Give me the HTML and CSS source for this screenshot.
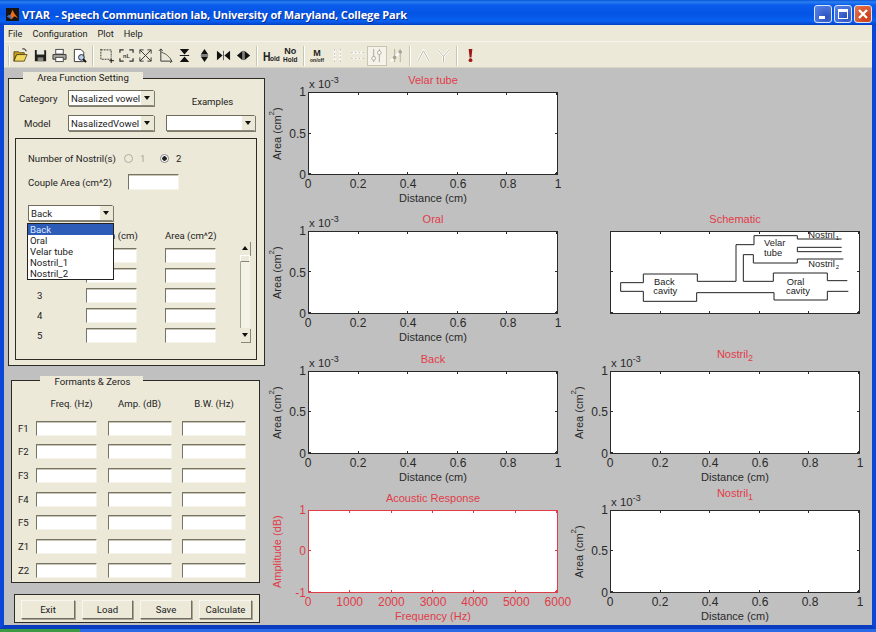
FILE: index.html
```html
<!DOCTYPE html>
<html lang="en">
<head>
    <meta charset="UTF-8">
    <title>VTAR - Speech Communication lab, University of Maryland, College Park</title>
    <link rel="stylesheet" href="styles.css">
</head>
<body>
<div class="window">
    <div class="titlebar">
        <svg class="app-icon" viewBox="0 0 14 14"><rect width="14" height="14" fill="#1a1410"/><path d="M1 9 L5 7 L7 2 L9 6 L13 11 L9 9 L6 12 Z" fill="#e8701a"/><path d="M1 9 L5 7 L6 12 Z" fill="#3a70c8"/></svg>
        <span class="title-text">VTAR &nbsp;- Speech Communication lab, University of Maryland, College Park</span>
        <div class="window-buttons">
            <div class="win-btn"><span class="min-glyph"></span></div>
            <div class="win-btn"><span class="max-glyph"></span></div>
            <div class="win-btn win-close">
                <svg viewBox="0 0 18 18"><path d="M5 5 L13 13 M13 5 L5 13" stroke="#fff" stroke-width="2.4"/></svg>
            </div>
        </div>
    </div>

    <div class="window-body">
        <div class="menubar">
            <span>File</span>
            <span>Configuration</span>
            <span>Plot</span>
            <span>Help</span>
        </div>

        <div class="toolbar">
            <div class="grip"></div>
            <!-- file -->
            <div class="tool"><svg viewBox="0 0 16 16"><path d="M1 4h5l1 1h5v2H4L1 14z" fill="#c8a020" stroke="#403000" stroke-width=".8"/><path d="M4 7h11l-3 7H1z" fill="#f0d860" stroke="#403000" stroke-width=".8"/><path d="M10 1c2-.5 4 .5 4 2.500" fill="none" stroke="#000"/></svg></div>
            <div class="tool"><svg viewBox="0 0 16 16"><path d="M2 2h11l1 1v11H2z" fill="#20201c"/><rect x="4" y="2" width="8" height="5" fill="#e8e8e0"/><rect x="5" y="10" width="6" height="4" fill="#8a8a80"/></svg></div>
            <div class="tool"><svg viewBox="0 0 16 16"><rect x="4" y="1.500" width="8" height="5" fill="#fff" stroke="#444"/><path d="M1 7h14v5H1z" fill="#a8a8a0" stroke="#333"/><rect x="4" y="10" width="8" height="4.500" fill="#fff" stroke="#444"/></svg></div>
            <div class="tool"><svg viewBox="0 0 16 16"><path d="M2.500 1.500h7l3 3v10h-10z" fill="#fff" stroke="#333"/><circle cx="10" cy="10" r="3" fill="#b8d0e8" stroke="#223"/><path d="M12 12l3 3" stroke="#111" stroke-width="2"/></svg></div>
            <div class="sep"></div>
            <!-- zoom and axes -->
            <div class="tool"><svg viewBox="0 0 16 16"><path d="M2 1v11h11" fill="none" stroke="#333" stroke-dasharray="2 1"/><path d="M2 2h11v8" fill="none" stroke="#333" stroke-dasharray="2 1"/><path d="M13 11v5M11 13.500h5" stroke="#111"/></svg></div>
            <div class="tool"><svg viewBox="0 0 16 16"><path d="M1 5V2h4M11 2h4v3M15 11v3h-4M5 14H1v-3" fill="none" stroke="#333" stroke-width="1.300"/><text class="icon-text" x="8" y="10.500" text-anchor="middle">nL</text></svg></div>
            <div class="tool"><svg viewBox="0 0 16 16"><path d="M2 2l12 12M14 2L2 14M2 2h4M2 2v4M14 2h-4M14 2v4M2 14h4M2 14v-4M14 14h-4M14 14v-4" fill="none" stroke="#333"/></svg></div>
            <div class="tool"><svg viewBox="0 0 16 16"><path d="M3 1v13h12" fill="none" stroke="#333"/><path d="M3 4l6 3 5 5" fill="none" stroke="#555"/><path d="M1 3l2-2 2 2M13 12l2 2-2 2" fill="none" stroke="#333"/></svg></div>
            <div class="tool"><svg viewBox="0 0 16 16"><path d="M3 1h10L8 7zM3 15h10L8 9z" fill="#111"/><path d="M3 8h10" stroke="#111"/></svg></div>
            <div class="tool"><svg viewBox="0 0 16 16"><path d="M8 1l4 6H4zM8 15l-4-6h8z" fill="#111"/><path d="M4 8h8" stroke="#777"/></svg></div>
            <div class="tool"><svg viewBox="0 0 16 16"><path d="M1 3v10l6-5zM15 3v10L9 8z" fill="#111"/><path d="M8 3v10" stroke="#555"/></svg></div>
            <div class="tool"><svg viewBox="0 0 16 16"><path d="M7 3v10L1 8zM9 3v10l6-5z" fill="#111"/><path d="M8 3v10" stroke="#777"/></svg></div>
            <div class="sep"></div>
            <!-- hold -->
            <div class="tool tool-hold"><span class="hold-big">H</span><span class="hold-small">old</span></div>
            <div class="tool tool-stack"><span class="hold-no">No</span><span class="hold-under">Hold</span></div>
            <div class="sep sep-tight"></div>
            <div class="tool tool-wide tool-stack"><span class="hold-no">M</span><span class="hold-tiny">on/off</span></div>
            <!-- disabled cursors -->
            <div class="tool"><svg viewBox="0 0 16 16"><path d="M5 1v14M11 1v14" stroke="#fff" stroke-width="2"/><path d="M5 1v14M11 1v14" stroke="#b8b5a4" stroke-dasharray="2 2"/></svg></div>
            <div class="tool"><svg viewBox="0 0 16 16"><path d="M1 5h14M1 11h14" stroke="#fff" stroke-width="2"/><path d="M1 5h14M1 11h14" stroke="#b8b5a4" stroke-dasharray="2 2"/></svg></div>
            <div class="tool tool-pressed"><svg viewBox="0 0 16 16"><path d="M5 1v14M11 1v14" stroke="#a8a594"/><circle cx="5" cy="11" r="2" fill="#fff" stroke="#a8a594"/><circle cx="11" cy="5" r="2" fill="#fff" stroke="#a8a594"/></svg></div>
            <div class="tool"><svg viewBox="0 0 16 16"><path d="M6 1v14M12 1v14" stroke="#b0ad9c"/><path d="M2 14L14 2" stroke="#fff" stroke-width="2"/><circle cx="6" cy="10" r="2" fill="#a8a594"/><circle cx="12" cy="4" r="2" fill="#a8a594"/></svg></div>
            <div class="sep"></div>
            <div class="tool"><svg viewBox="0 0 16 16"><path d="M2 14L8 3l6 11" fill="none" stroke="#fff" stroke-width="2.500"/><path d="M2 14L8 3l6 11" fill="none" stroke="#b8b5a4"/></svg></div>
            <div class="tool"><svg viewBox="0 0 16 16"><path d="M2 2l6 7 6-7M8 9v6" fill="none" stroke="#fff" stroke-width="2.500"/><path d="M2 2l6 7 6-7M8 9v6" fill="none" stroke="#b8b5a4"/></svg></div>
            <div class="sep"></div>
            <div class="tool"><svg viewBox="0 0 16 16"><path d="M6 1h4l-1 9H7z" fill="#a01818"/><circle cx="8" cy="13" r="2" fill="#a01818"/></svg></div>
        </div>

        <div class="client">
            <div class="controls">
                <div class="panel panel-setting">
                    <div class="panel-title title-setting">Area Function Setting</div>
                    <div class="setting-top">
                        <label>Category</label>
                        <div class="select"><span>Nasalized vowel</span><i class="arrow"></i></div>
                        <label class="examples-label">Examples</label>
                        <label class="model-label">Model</label>
                        <div class="select"><span>NasalizedVowel</span><i class="arrow"></i></div>
                        <div class="select select-examples"><span></span><i class="arrow"></i></div>
                    </div>

                    <div class="panel section-panel">
                        <div class="nostril-row">
                            <span class="nostril-label">Number of Nostril(s)</span>
                            <i class="radio radio-off"></i><span class="radio-text radio-text-off">1</span>
                            <i class="radio radio-on"></i><span class="radio-text">2</span>
                        </div>
                        <div class="couple-row">
                            <span class="couple-label">Couple Area (cm^2)</span>
                            <div class="field field-couple"></div>
                        </div>
                        <div class="section-select">
                            <div class="select"><span>Back</span><i class="arrow"></i></div>
                            <ul class="dropdown">
                                <li class="selected">Back</li>
                                <li>Oral</li>
                                <li>Velar tube</li>
                                <li>Nostril_1</li>
                                <li>Nostril_2</li>
                            </ul>
                        </div>
                        <div class="section-area">
                            <div class="section-table">
                                <span></span><span class="col-head">Length (cm)</span><span class="col-head">Area (cm^2)</span>
                                <span class="row-num"></span><div class="field"></div><div class="field"></div>
                                <span class="row-num"></span><div class="field"></div><div class="field"></div>
                                <span class="row-num">3</span><div class="field"></div><div class="field"></div>
                                <span class="row-num">4</span><div class="field"></div><div class="field"></div>
                                <span class="row-num">5</span><div class="field"></div><div class="field"></div>
                            </div>
                            <div class="scrollbar">
                                <div class="scroll-btn"><i class="arrow-up"></i></div>
                                <div class="scroll-thumb"></div>
                                <div class="scroll-track"></div>
                                <div class="scroll-btn"><i class="arrow"></i></div>
                            </div>
                        </div>
                    </div>
                </div>

                <div class="panel panel-formants">
                    <div class="panel-title title-formants">Formants &amp; Zeros</div>
                    <div class="formant-table">
                        <span></span><span class="col-head col-freq">Freq. (Hz)</span><span class="col-head">Amp. (dB)</span><span class="col-head">B.W. (Hz)</span>
                        <span>F1</span><div class="field"></div><div class="field"></div><div class="field"></div>
                        <span>F2</span><div class="field"></div><div class="field"></div><div class="field"></div>
                        <span>F3</span><div class="field"></div><div class="field"></div><div class="field"></div>
                        <span>F4</span><div class="field"></div><div class="field"></div><div class="field"></div>
                        <span>F5</span><div class="field"></div><div class="field"></div><div class="field"></div>
                        <span>Z1</span><div class="field"></div><div class="field"></div><div class="field"></div>
                        <span>Z2</span><div class="field"></div><div class="field"></div><div class="field"></div>
                    </div>
                </div>

                <div class="panel panel-buttons">
                    <button class="btn btn-exit">Exit</button>
                    <button class="btn btn-load">Load</button>
                    <button class="btn btn-save">Save</button>
                    <button class="btn btn-calc">Calculate</button>
                </div>
            </div>

            <div class="plots">
                <div class="plot">
                    <div class="plot-head"><span class="scale">x 10<sup>-3</sup></span><span class="plot-title">Velar tube</span></div>
                    <div class="plot-body">
                        <span class="ylabel">Area (cm<sup>2</sup>)</span>
                        <div class="yticks"><span>1</span><span>0.5</span><span>0</span></div>
                        <div class="axes"></div>
                    </div>
                    <div class="xticks"><span>0</span><span>0.2</span><span>0.4</span><span>0.6</span><span>0.8</span><span>1</span></div>
                    <div class="xlabel">Distance (cm)</div>
                </div>

                <div class="plot"></div>

                <div class="plot">
                    <div class="plot-head"><span class="scale">x 10<sup>-3</sup></span><span class="plot-title">Oral</span></div>
                    <div class="plot-body">
                        <span class="ylabel">Area (cm<sup>2</sup>)</span>
                        <div class="yticks"><span>1</span><span>0.5</span><span>0</span></div>
                        <div class="axes"></div>
                    </div>
                    <div class="xticks"><span>0</span><span>0.2</span><span>0.4</span><span>0.6</span><span>0.8</span><span>1</span></div>
                    <div class="xlabel">Distance (cm)</div>
                </div>

                <div class="plot">
                    <div class="plot-head"><span></span><span class="plot-title">Schematic</span></div>
                    <div class="plot-body">
                        <span class="ylabel"></span>
                        <div class="yticks"></div>
                        <div class="axes">
                            <svg class="schematic" viewBox="63 84 744 243">
                                <path d="M92 236H160V210H322V232H438V122H492V95H622V105H755M92 236V262H160V292H320V266H552V288H712V262H775M460 232H550V207H712V230H772M460 232V152H490V177H622V165H760M755 130H622V143H755" fill="none" stroke="#222" stroke-width="3"/>
                                <text x="192" y="243">Back</text>
                                <text x="190" y="270">cavity</text>
                                <text x="590" y="243">Oral</text>
                                <text x="588" y="269">cavity</text>
                                <text x="522" y="125">Velar</text>
                                <text x="522" y="155">tube</text>
                                <text x="655" y="103">Nostril<tspan class="sch-sub" dx="3" dy="6">1</tspan></text>
                                <text x="655" y="190">Nostril<tspan class="sch-sub" dx="3" dy="6">2</tspan></text>
                            </svg>
                        </div>
                    </div>
                </div>

                <div class="plot">
                    <div class="plot-head"><span class="scale">x 10<sup>-3</sup></span><span class="plot-title">Back</span></div>
                    <div class="plot-body">
                        <span class="ylabel">Area (cm<sup>2</sup>)</span>
                        <div class="yticks"><span>1</span><span>0.5</span><span>0</span></div>
                        <div class="axes"></div>
                    </div>
                    <div class="xticks"><span>0</span><span>0.2</span><span>0.4</span><span>0.6</span><span>0.8</span><span>1</span></div>
                    <div class="xlabel">Distance (cm)</div>
                </div>

                <div class="plot">
                    <div class="plot-head"><span class="scale">x 10<sup>-3</sup></span><span class="plot-title title-high">Nostril<sub>2</sub></span></div>
                    <div class="plot-body">
                        <span class="ylabel">Area (cm<sup>2</sup>)</span>
                        <div class="yticks"><span>1</span><span>0.5</span><span>0</span></div>
                        <div class="axes"></div>
                    </div>
                    <div class="xticks"><span>0</span><span>0.2</span><span>0.4</span><span>0.6</span><span>0.8</span><span>1</span></div>
                    <div class="xlabel">Distance (cm)</div>
                </div>

                <div class="plot plot-red">
                    <div class="plot-head"><span></span><span class="plot-title">Acoustic Response</span></div>
                    <div class="plot-body">
                        <span class="ylabel">Amplitude (dB)</span>
                        <div class="yticks"><span>1</span><span>0</span><span>-1</span></div>
                        <div class="axes"></div>
                    </div>
                    <div class="xticks"><span>0</span><span>1000</span><span>2000</span><span>3000</span><span>4000</span><span>5000</span><span>6000</span></div>
                    <div class="xlabel">Frequency (Hz)</div>
                </div>

                <div class="plot">
                    <div class="plot-head"><span class="scale">x 10<sup>-3</sup></span><span class="plot-title title-high">Nostril<sub>1</sub></span></div>
                    <div class="plot-body">
                        <span class="ylabel">Area (cm<sup>2</sup>)</span>
                        <div class="yticks"><span>1</span><span>0.5</span><span>0</span></div>
                        <div class="axes"></div>
                    </div>
                    <div class="xticks"><span>0</span><span>0.2</span><span>0.4</span><span>0.6</span><span>0.8</span><span>1</span></div>
                    <div class="xlabel">Distance (cm)</div>
                </div>
            </div>
        </div>
    </div>

    <div class="taskbar"><div class="start-edge"></div></div>
</div>
</body>
</html>
```

FILE: styles.css
```css
* {
    box-sizing: border-box;
}
html, body {
    margin: 0;
    height: 100%;
    overflow: hidden;
}
body {
    font-family: Roboto, "Liberation Sans", sans-serif;
    font-size: 9.600px;
    color: #222;
}
.window {
    width: 876px;
    height: 632px;
    display: flex;
    flex-direction: column;
}

/* title bar */
.titlebar {
    height: 25px;
    display: flex;
    align-items: center;
    padding: 3px 4px 0 6px;
    background: linear-gradient(#0a55d8 0, #2a80f0 2px, #0a5cec 5px, #0454e4 14px, #0a62f0 21px, #0440c8 25px);
}
.app-icon {
    width: 13px;
    height: 13px;
    flex: none;
}
.title-text {
    margin-left: 3px;
    font-family: "Open Sans", sans-serif;
    font-weight: 700;
    font-size: 11px;
    letter-spacing: -0.15px;
    color: #fff;
    white-space: pre;
    text-shadow: 1px 1px 0 #0a2c90;
}
.window-buttons {
    margin-left: auto;
    display: flex;
    gap: 2px;
}
.win-btn {
    width: 18px;
    height: 18px;
    border: 1px solid #d8e4f8;
    border-radius: 3px;
    background: radial-gradient(circle at 70% 70%, #2c50c0, #5a88e8);
    position: relative;
}
.win-close {
    background: radial-gradient(circle at 70% 70%, #c83810, #e87850);
}
.win-close svg {
    position: absolute;
    left: -1px;
    top: -1px;
    width: 18px;
    height: 18px;
}
.min-glyph {
    position: absolute;
    left: 4px;
    top: 10px;
    width: 6px;
    height: 3px;
    background: #fff;
}
.max-glyph {
    position: absolute;
    left: 3px;
    top: 3px;
    width: 10px;
    height: 10px;
    border: 1px solid #fff;
    border-top-width: 3px;
}

.window-body {
    flex: 1;
    min-height: 0;
    display: flex;
    flex-direction: column;
    border: 4px solid #0a46d8;
    border-top: 0;
    border-bottom-color: #0a3cc0;
}

/* menu */
.menubar {
    height: 16px;
    background: #ece9d8;
    display: flex;
    align-items: center;
    font-size: 9.200px;
    padding-left: 4px;
    gap: 10px;
}

/* toolbar */
.toolbar {
    height: 27px;
    background: #ece9d8;
    border-top: 1px solid #f8f6ec;
    border-bottom: 1px solid #d8d5c4;
    display: flex;
    align-items: center;
    padding: 2px 0 0 4px;
    font-family: "Liberation Sans", sans-serif;
}
.grip {
    width: 2px;
    height: 20px;
    margin-right: 1px;
    background: #c8c5b2;
    border-right: 1px solid #fff;
}
.tool {
    width: 19.500px;
    height: 20px;
    flex: none;
    display: flex;
    align-items: center;
    justify-content: center;
}
.tool svg {
    width: 15px;
    height: 15px;
}
.icon-text {
    font-size: 6px;
    font-weight: 700;
    fill: #333;
}
.tool-wide {
    width: 22px;
}
.tool-pressed {
    background: #f6f4ea;
    border: 1px solid #c8c5b2;
}
.sep {
    width: 2px;
    height: 20px;
    flex: none;
    margin: 0 3px;
    background: #c8c5b2;
    border-right: 1px solid #fff;
}
.sep-tight {
    margin: 0 1px 0 3px;
}
.tool-hold {
    align-items: flex-end;
    padding-bottom: 3px;
    font-weight: 700;
    line-height: 1;
}
.hold-big {
    font-size: 13px;
    display: inline-block;
    transform: scaleX(.8);
    margin-right: -1px;
}
.hold-small {
    font-size: 6.500px;
}
.tool-stack {
    flex-direction: column;
    font-weight: 700;
    line-height: 1;
}
.hold-no {
    font-size: 9px;
}
.hold-under {
    font-size: 6.500px;
    margin-top: 1px;
}
.hold-tiny {
    font-size: 5px;
}

/* client area */
.client {
    flex: 1;
    min-height: 0;
    display: flex;
    background: #c0c0c0;
}
.controls {
    width: 262px;
    flex: none;
}
.panel {
    background: #ece9d8;
    border: 1px solid #2c2c24;
    position: relative;
}
.panel-title {
    position: absolute;
    height: 12px;
    background: #ece9d8;
    text-align: center;
    line-height: 12px;
}

.panel-setting {
    width: 257px;
    height: 288px;
    margin: 10px 0 0 4px;
    padding: 11px 0 0 10px;
}
.title-setting {
    top: -7px;
    left: 14px;
    width: 120px;
}
.setting-top {
    display: grid;
    grid-template-columns: 49px 86px 101px;
    grid-template-rows: 16px 16px;
    row-gap: 9px;
    align-items: center;
}
.examples-label {
    margin-left: 12px;
    padding-left: 4px;
    text-align: center;
    position: relative;
    top: 3px;
}
.model-label {
    padding-left: 5px;
}
.select-examples {
    margin-left: 12px;
}

/* dropdown boxes */
.select {
    height: 16px;
    background: linear-gradient(to left, #ece9d8 12px, #fff 12px);
    border: 1px solid;
    border-color: #706c5c #e8e6d8 #8a8778 #706c5c;
    box-shadow: 1px 1px 0 #807c6c;
    display: flex;
    align-items: center;
    justify-content: space-between;
    padding: 0 3px 0 2px;
    white-space: nowrap;
    overflow: hidden;
}
.arrow {
    flex: none;
    width: 0;
    height: 0;
    border: 3px solid transparent;
    border-top: 4px solid #111;
    border-bottom: 0;
}
.arrow-up {
    width: 0;
    height: 0;
    border: 3px solid transparent;
    border-bottom: 4px solid #111;
    border-top: 0;
}

.section-panel {
    width: 242px;
    height: 222px;
    margin: 7px 0 0 -4px;
    padding: 11px 0 0 12px;
}
.nostril-row {
    height: 16px;
    display: flex;
    align-items: center;
}
.nostril-label {
    width: 96px;
}
.radio {
    width: 9px;
    height: 9px;
    border-radius: 50%;
    background: #fff;
    border: 1px solid #888;
    flex: none;
}
.radio-off {
    background: #ece9d8;
    border-color: #b0ad9c;
}
.radio-on {
    background: radial-gradient(circle, #222 0 2px, #fff 2.500px);
}
.radio-text {
    margin-left: 7px;
    width: 20px;
}
.radio-text-off {
    color: #a8a594;
}
.couple-row {
    display: flex;
    align-items: center;
    margin-top: 8px;
}
.couple-label {
    width: 100px;
}
.field {
    height: 15px;
    background: #fff;
    border-top: 1px solid #787464;
    border-left: 1px solid #787464;
    border-right: 1px solid #f6f4ea;
    border-bottom: 1px solid #f6f4ea;
    box-shadow: inset 0 1px 0 #c8c5b8;
}
.field-couple {
    width: 51px;
    height: 16px;
}
.section-select {
    position: relative;
    width: 85px;
    margin-top: 15px;
}
.dropdown {
    position: absolute;
    left: -1px;
    top: 18px;
    width: 87px;
    height: 57px;
    margin: 0;
    padding: 0;
    list-style: none;
    background: #fff;
    border: 1px solid #222;
    z-index: 2;
}
.dropdown li {
    height: 11px;
    line-height: 11px;
    padding-left: 2px;
}
.dropdown .selected {
    background: #2c5cb8;
    color: #dfe8ff;
}
.section-area {
    display: flex;
    align-items: flex-start;
    margin-top: 6px;
}
.section-table {
    display: grid;
    grid-template-columns: 58px 51px 79px;
    grid-template-rows: 16px repeat(5, 15px);
    row-gap: 5px;
    align-items: center;
}
.section-table .field:nth-child(3n) {
    margin-left: 28px;
}
.section-table .col-head:nth-child(3) {
    padding-left: 28px;
}
.col-head {
    text-align: center;
    white-space: nowrap;
}
.col-freq {
    padding-left: 10px;
}
.row-num {
    padding-left: 9px;
}
.scrollbar {
    width: 10px;
    height: 101px;
    margin: 14px 0 0 24px;
    display: flex;
    flex-direction: column;
}
.scroll-btn {
    height: 14px;
    background: #ece9d8;
    box-shadow: 1px 1px 0 #8a8778;
    display: flex;
    align-items: center;
    justify-content: center;
}
.scroll-thumb {
    height: 7px;
    background: #ece9d8;
    border: 1px solid #fff;
    border-bottom-color: #8a8778;
}
.scroll-track {
    flex: 1;
    background: #f4f2e6;
    border-left: 1px solid #a8a594;
}

.panel-formants {
    width: 249px;
    height: 203px;
    margin: 14px 0 0 7px;
    padding: 14px 0 0 6px;
}
.title-formants {
    top: -5px;
    left: 28px;
    width: 103px;
    padding-left: 2px;
}
.formant-table {
    display: grid;
    grid-template-columns: 7.500px 61px 64px 64px;
    grid-template-rows: 17px repeat(7, 15px);
    column-gap: 10.500px;
    row-gap: 8.700px;
    align-items: center;
}
.formant-table span {
    white-space: nowrap;
}

.panel-buttons {
    width: 246px;
    height: 29px;
    margin: 11px 0 0 10px;
    padding: 5px 0 0 6px;
    display: flex;
    gap: 7px;
}
.btn {
    height: 19px;
    padding: 0;
    font: inherit;
    color: #222;
    background: #ece9d8;
    border: 1px solid;
    border-color: #f8f6ee #716f64 #716f64 #f8f6ee;
    box-shadow: 1px 1px 0 #a8a594;
}
.btn-exit { width: 54px; }
.btn-load { width: 51px; }
.btn-save { width: 52px; }
.btn-calc { width: 53px; }

/* plots */
.plots {
    flex: 1;
    display: grid;
    grid-template-columns: 302px 302px;
    grid-auto-rows: 139.330px;
    font-family: "Liberation Sans", sans-serif;
    font-size: 11px;
}
.plot {
    --ink: #2a2a2a;
    --xstep: 20%;
    color: var(--ink);
}
.plot-red {
    --ink: #e03c48;
    --xstep: 16.667%;
}
.plot-head {
    height: 24px;
    width: 250px;
    margin-left: 42px;
    position: relative;
}
.scale {
    position: absolute;
    left: 1px;
    bottom: 1px;
    line-height: 14px;
    font-size: 11.500px;
}
.scale sup {
    font-size: 9px;
    line-height: 0;
}
.plot-title {
    position: absolute;
    left: 0;
    right: 0;
    top: 5px;
    text-align: center;
    color: #e03c48;
    line-height: 14px;
}
.title-high {
    top: 0;
}
.plot-title sub {
    font-size: 9px;
    line-height: 0;
}
.plot-body {
    display: flex;
    height: 83px;
}
.ylabel {
    width: 18px;
    flex: none;
    writing-mode: vertical-rl;
    transform: rotate(180deg);
    text-align: center;
    white-space: nowrap;
    line-height: 18px;
    margin-left: 2px;
}
.ylabel sup {
    font-size: 8px;
    line-height: 0;
}
.yticks {
    width: 20px;
    margin-right: 2px;
    flex: none;
    display: flex;
    flex-direction: column;
    justify-content: space-between;
    align-items: flex-end;
    font-size: 12px;
}
.yticks span {
    height: 0;
    line-height: 0;
}
.axes {
    width: 250px;
    height: 83px;
    flex: none;
    border: 1px solid var(--ink);
    background-color: #fff;
    background-image:
        repeating-linear-gradient(90deg, transparent 0 calc(var(--xstep) - 1px), var(--ink) calc(var(--xstep) - 1px) var(--xstep)),
        repeating-linear-gradient(90deg, transparent 0 calc(var(--xstep) - 1px), var(--ink) calc(var(--xstep) - 1px) var(--xstep)),
        repeating-linear-gradient(180deg, transparent 0 calc(50% - 1px), var(--ink) calc(50% - 1px) 50%),
        repeating-linear-gradient(180deg, transparent 0 calc(50% - 1px), var(--ink) calc(50% - 1px) 50%);
    background-size: 100% 2px, 100% 2px, 2px 100%, 2px 100%;
    background-position: 0 0, 0 100%, 0 0, 100% 0;
    background-repeat: no-repeat;
}
.xticks {
    width: 250px;
    margin: 2px 0 0 42px;
    height: 14px;
    display: flex;
    justify-content: space-between;
    line-height: 14px;
    font-size: 12px;
}
.xticks span {
    width: 0;
    display: flex;
    justify-content: center;
}
.xlabel {
    width: 250px;
    margin-left: 42px;
    height: 14px;
    line-height: 14px;
    text-align: center;
}
.schematic {
    display: block;
    width: 248px;
    height: 81px;
    overflow: visible;
}
.schematic text {
    font-size: 28px;
    fill: #222;
}
.schematic .sch-sub {
    font-size: 18px;
}

/* strip of the desktop taskbar under the window */
.taskbar {
    height: 3px;
    background: #2a6ae8;
}
.start-edge {
    width: 80px;
    height: 3px;
    background: #3c9a44;
}
```
